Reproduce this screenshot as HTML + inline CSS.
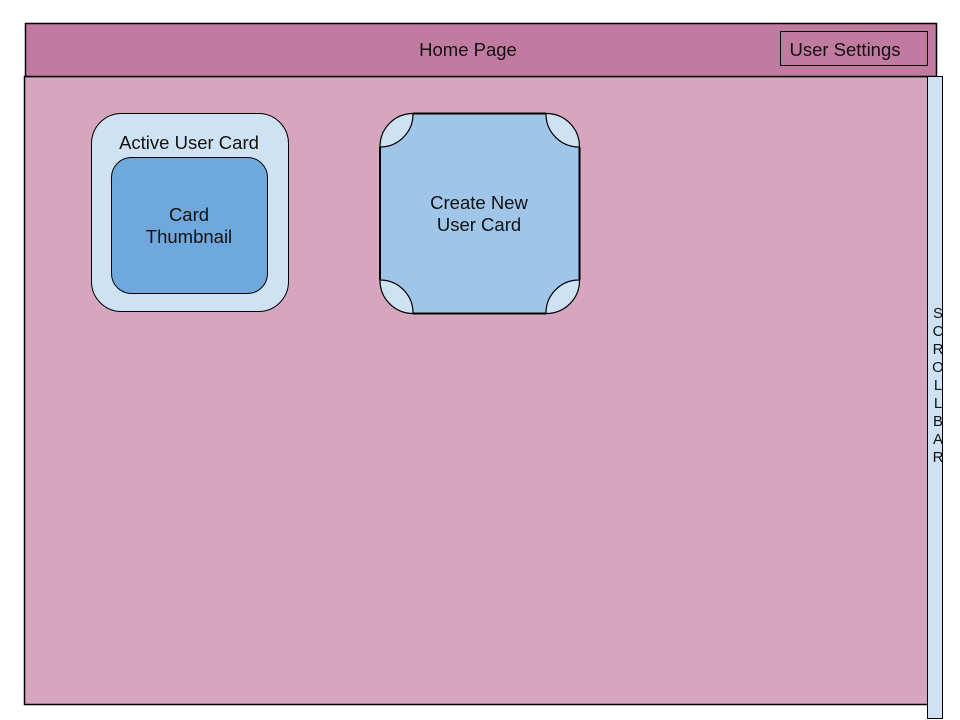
<!DOCTYPE html>
<html><head><meta charset="utf-8"><style>html,body{margin:0;padding:0;background:#fff;width:960px;height:720px;overflow:hidden}svg{display:block}</style></head>
<body>
<svg width="960" height="720" viewBox="0 0 960 720" font-family="Liberation Sans, Arial, sans-serif" fill="#111">
<rect x="24.5" y="76.5" width="904" height="628" fill="#d5a6bd" stroke="#000" stroke-width="1.5"/>
<rect x="25.5" y="23.5" width="911" height="53" fill="#c27ba0" stroke="#000" stroke-width="1.5"/>
<g font-size="18.5" text-anchor="middle" fill="#111" style="font-family:'Liberation Sans',sans-serif">
<text x="468" y="56">Home Page</text>
<text x="845" y="56">User Settings</text>
<text x="189" y="149">Active User Card</text>
<text x="189" y="221">Card</text>
<text x="189" y="243">Thumbnail</text>
</g>
<rect x="780.5" y="31.5" width="147" height="34" fill="none" stroke="#000" stroke-width="1"/>
<rect x="927.5" y="76.5" width="15" height="642" fill="#cfe2f3" stroke="#000" stroke-width="1"/>
<g font-size="15" text-anchor="middle" fill="#111" style="font-family:'Liberation Sans',sans-serif">
<text x="938" y="318">S</text><text x="938" y="336">C</text><text x="938" y="354">R</text><text x="938" y="372">O</text><text x="938" y="390">L</text><text x="938" y="408">L</text><text x="938" y="426">B</text><text x="938" y="444">A</text><text x="938" y="462">R</text>
</g>
<rect x="91.5" y="113.5" width="197" height="198" rx="30" fill="#cfe2f3" stroke="#000" stroke-width="1"/>
<rect x="111.5" y="157.5" width="156" height="136" rx="20" fill="#6fa8dc" stroke="#000" stroke-width="1"/>
<g font-size="18.5" text-anchor="middle" fill="#111" style="font-family:'Liberation Sans',sans-serif">
<text x="189" y="149">Active User Card</text>
<text x="189" y="221">Card</text>
<text x="189" y="243">Thumbnail</text>
</g>
<rect x="380" y="113.5" width="199.5" height="200" rx="33" fill="#cfe2f3" stroke="#000" stroke-width="1.2"/>
<path d="M413 113.5 L546 113.5 A33 33 0 0 0 579.5 147 L579.5 280 A33 33 0 0 0 546 313.5 L413 313.5 A33 33 0 0 0 380 280 L380 147 A33 33 0 0 0 413 113.5 Z" fill="#9fc5e8" stroke="#000" stroke-width="1.2"/>
<path d="M413 113.5 L546 113.5 M579.5 147 L579.5 280 M546 313.5 L413 313.5 M380 280 L380 147" stroke="#000" stroke-width="2" fill="none"/>
<g font-size="18.5" text-anchor="middle" fill="#111" style="font-family:'Liberation Sans',sans-serif">
<text x="479" y="209">Create New</text>
<text x="479" y="231">User Card</text>
</g>
</svg>
</body></html>
